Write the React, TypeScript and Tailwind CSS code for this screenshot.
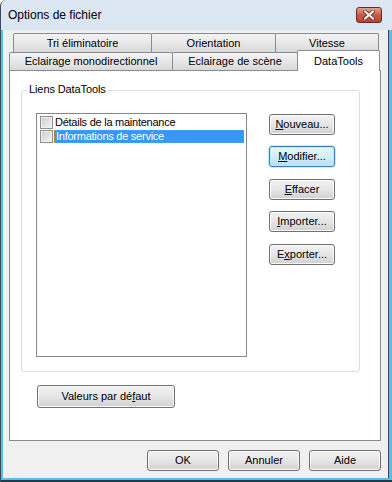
import React from "react";

const font = { fontFamily: '"Liberation Sans", Arial, sans-serif' };

function Tab({ label, className }: { label: string; className: string }) {
  return (
    <div
      className={`flex items-center justify-center border border-b-0 border-[#898c95] rounded-t-[2px] bg-gradient-to-b from-[#f3f3f3] via-[#e8e8e8] to-[#d8d8d8] text-[11px] leading-none text-black ${className}`}
    >
      {label}
    </div>
  );
}

function Btn({
  children,
  className = "",
  focused = false,
}: {
  children: React.ReactNode;
  className?: string;
  focused?: boolean;
}) {
  const skin = focused
    ? "border-[#3c7fb1] bg-gradient-to-b from-[#e8f6fd] via-[#d4eefc] to-[#b4def6] shadow-[inset_0_0_0_1px_#bfe9fc,0_0_0_1px_#c4ecfb]"
    : "border-[#707070] bg-gradient-to-b from-[#f2f2f2] via-[#e6e6e6] to-[#d0d0d0] shadow-[inset_0_0_0_1px_#fbfbfb]";
  return (
    <div
      className={`flex items-center justify-center rounded-[3px] border text-[11px] leading-none text-black ${skin} ${className}`}
    >
      {children}
    </div>
  );
}

function Check() {
  return (
    <div className="w-[13px] h-[13px] border border-[#8e8f8f] bg-gradient-to-br from-[#cbcbcb] to-[#f6f6f6] shadow-[inset_0_0_0_1px_#f0f0f0]" />
  );
}

export default function App() {
  return (
    <div
      style={font}
      className="w-[392px] h-[482px] flex flex-col border-l border-[#3a4a5c] rounded-tl-[6px] overflow-hidden bg-gradient-to-b from-[#dce7f3] to-[#c3d6eb]"
    >
      {/* barre de titre */}
      <div className="h-[30px] flex items-center justify-between pl-[7px] pr-[10px] shrink-0">
        <span className="text-[12px] text-black">Options de fichier</span>
        <div className="w-[26px] h-[16px] mb-[1px] rounded-[3px] border border-[#6b2a24] bg-gradient-to-b from-[#e4a091] via-[#c95a48] to-[#b8412f] flex items-center justify-center">
          <svg width="12" height="10" viewBox="0 0 12 10">
            <path d="M2 1.5 L10 8.5 M10 1.5 L2 8.5" stroke="#5a2a24" strokeWidth="3.6" strokeLinecap="square" />
            <path d="M2 1.5 L10 8.5 M10 1.5 L2 8.5" stroke="#ffffff" strokeWidth="2" strokeLinecap="square" />
          </svg>
        </div>
      </div>

      {/* cadre */}
      <div className="flex-1 flex flex-col bg-[#59bde9] pl-[2px] pr-[3px] pb-[2px] border-b-2 border-[#26384c]">
        <div className="flex-1 flex flex-col bg-[#f0f0f0] border-r border-[#3a4a5c] pl-[6px] pt-[3px]">
          {/* onglets */}
          <div className="w-[372px]">
            <div className="flex h-[19px] pl-[4px]">
              <Tab label="Tri éliminatoire" className="w-[139px]" />
              <Tab label="Orientation" className="w-[125px] -ml-px" />
              <Tab label="Vitesse" className="w-[104px] -ml-px" />
            </div>
            <div className="flex items-end h-[18px]">
              <Tab label="Eclairage monodirectionnel" className="w-[164px] h-[18px]" />
              <Tab label="Eclairage de scène" className="w-[126px] h-[18px] -ml-px" />
              <div className="relative z-10 w-[83px] h-[21px] -mb-px -ml-px border border-b-0 border-[#898c95] rounded-t-[2px] bg-white flex items-start justify-center pt-[5px] text-[11px] leading-none text-black">
                DataTools
              </div>
            </div>

            {/* panneau */}
            <div className="h-[371px] border border-[#898c95] bg-white">
              <div className="relative ml-[11px] mt-[19px] w-[339px] h-[282px] rounded-[3px] border border-[#d5dfe5] pl-[14px] pt-[22px] flex">
                <span className="absolute left-[5px] -top-[8px] bg-white px-[2px] text-[11px] leading-[13px] tracking-[-0.1px] text-black">
                  Liens DataTools
                </span>
                <div className="w-[211px] h-[244px] border border-[#828790] bg-white pt-[1px] pl-[3px] pr-[2px]">
                  <div className="flex items-center h-[14px]">
                    <Check />
                    <span className="ml-[2px] text-[11px] leading-none tracking-[-0.25px] text-black">
                      Détails de la maintenance
                    </span>
                  </div>
                  <div className="flex items-center h-[14px]">
                    <Check />
                    <div className="ml-[1px] flex-1 h-[13px] bg-[#3399ff] border border-dotted border-[#c8873a] flex items-center pl-[1px] text-[11px] leading-none tracking-[-0.25px] text-white">
                      Informations de service
                    </div>
                  </div>
                </div>
                <div className="ml-[22px] mt-[1px] flex flex-col">
                  <Btn className="w-[66px] h-[21px]">
                    <span>
                      <u>N</u>ouveau...
                    </span>
                  </Btn>
                  <Btn focused className="w-[66px] h-[21px] mt-[11px]">
                    <span>
                      <u>M</u>odifier...
                    </span>
                  </Btn>
                  <Btn className="w-[66px] h-[21px] mt-[12px]">
                    <span>
                      <u>E</u>ffacer
                    </span>
                  </Btn>
                  <Btn className="w-[66px] h-[21px] mt-[11px]">
                    <span>
                      <u>I</u>mporter...
                    </span>
                  </Btn>
                  <Btn className="w-[66px] h-[21px] mt-[12px]">
                    <span>
                      E<u>x</u>porter...
                    </span>
                  </Btn>
                </div>
              </div>
              <Btn className="ml-[27px] mt-[13px] w-[138px] h-[23px]">
                <span>
                  Valeurs par dé<u>f</u>aut
                </span>
              </Btn>
            </div>

            {/* boutons du bas */}
            <div className="flex justify-end gap-[9px] mt-[9px]">
              <Btn className="w-[72px] h-[21px]">OK</Btn>
              <Btn className="w-[72px] h-[21px]">Annuler</Btn>
              <Btn className="w-[72px] h-[21px]">Aide</Btn>
            </div>
          </div>
        </div>
      </div>
    </div>
  );
}
